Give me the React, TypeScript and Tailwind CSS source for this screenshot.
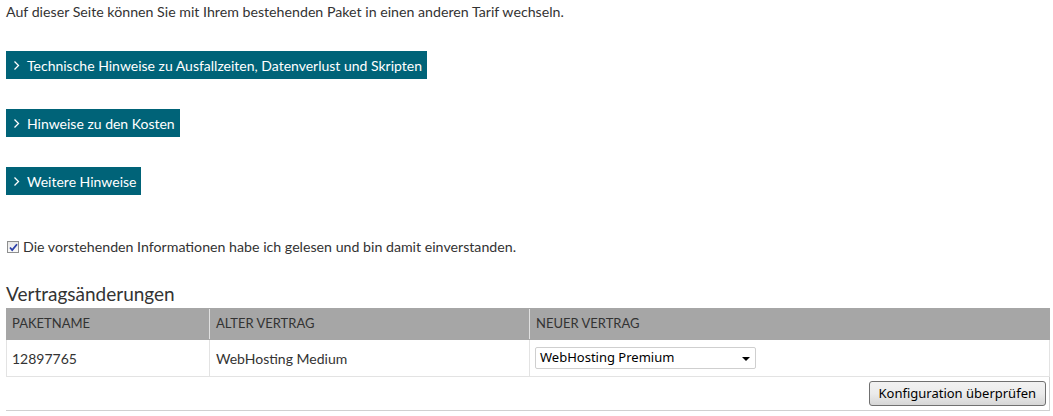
import React from 'react';

const sans = "font-['Lato','Liberation_Sans',sans-serif]";
const ui = "font-['Noto_Sans','Open_Sans','Liberation_Sans',sans-serif]";

const Chevron: React.FC = () => (
    <svg width="7" height="11" viewBox="0 0 7 11" className="shrink-0">
        <path d="M1.5 1.5l4 4-4 4" fill="none" stroke="white" strokeWidth="1.3" />
    </svg>
);

const NoticeToggle: React.FC<{ label: string }> = ({ label }) => (
    <button className="flex items-center gap-[7px] h-[28px] bg-[#006378] text-white text-[14px] pl-[7px] pr-[5px] self-start">
        <Chevron />
        <span>{label}</span>
    </button>
);

export default function App() {
    const notices = [
        'Technische Hinweise zu Ausfallzeiten, Datenverlust und Skripten',
        'Hinweise zu den Kosten',
        'Weitere Hinweise',
    ];

    return (
        <div className={`${sans} w-[1053px] h-[416px] bg-white text-[#333] px-[6px] pt-[3px] overflow-hidden`}>
            <p className="text-[14.2px] leading-[18px]">
                Auf dieser Seite können Sie mit Ihrem bestehenden Paket in einen anderen Tarif wechseln.
            </p>

            <div className="flex flex-col gap-[30px] mt-[30px]">
                {notices.map(n => (
                    <NoticeToggle key={n} label={n} />
                ))}
            </div>

            <label className="flex items-center gap-[4px] mt-[43px] text-[14.2px] leading-[18px]">
                <span className="w-[12px] h-[12px] ml-[1px] border border-[#8e8f8f] bg-gradient-to-b from-[#e8e8e8] to-[#fafafa] flex items-center justify-center">
                    <svg width="9" height="9" viewBox="0 0 9 9">
                        <path d="M1 4.5l2.2 2.5L8 1.2" fill="none" stroke="#2b3fa8" strokeWidth="1.8" />
                    </svg>
                </span>
                <span>Die vorstehenden Informationen habe ich gelesen und bin damit einverstanden.</span>
            </label>

            <h2 className="text-[19px] leading-[24px] mt-[26px] text-[#333]">Vertragsänderungen</h2>

            <div className="mt-[2px] w-[1044px]">
                <div className="grid grid-cols-[203px_320px_1fr] bg-[#a6a6a6] h-[32px] text-[13px] uppercase text-[#333] border border-[#a6a6a6]">
                    <div className="flex items-center pl-[5px] border-r border-[#e0e0e0]">Paketname</div>
                    <div className="flex items-center pl-[6px] border-r border-[#e0e0e0]">Alter Vertrag</div>
                    <div className="flex items-center pl-[6px]">Neuer Vertrag</div>
                </div>
                <div className="grid grid-cols-[203px_320px_1fr] h-[37px] text-[14px] border-x border-b border-[#e3e3e3]">
                    <div className="flex items-center pl-[5px] border-r border-[#e3e3e3]">12897765</div>
                    <div className="flex items-center pl-[6px] border-r border-[#e3e3e3]">WebHosting Medium</div>
                    <div className="flex items-center pl-[5px]">
                        <div className={`${ui} relative w-[221px] h-[22px] border border-[#cfcfcf] rounded-[2px] bg-white flex items-center pl-[4px] text-[13px] text-black`}>
                            WebHosting Premium
                            <span className="absolute right-[5px] top-[9px] w-0 h-0 border-x-[4px] border-x-transparent border-t-[4px] border-t-black" />
                        </div>
                    </div>
                </div>
                <div className="flex justify-end items-center h-[34px] border-r border-b border-[#d0d0d0] pr-[3px]">
                    <button className={`${ui} h-[25px] px-[9px] text-[13px] text-black rounded-[3px] border border-[#707070] bg-gradient-to-b from-[#f2f2f2] via-[#ebebeb] to-[#d6d6d6]`}>
                        Konfiguration überprüfen
                    </button>
                </div>
            </div>
        </div>
    );
}
